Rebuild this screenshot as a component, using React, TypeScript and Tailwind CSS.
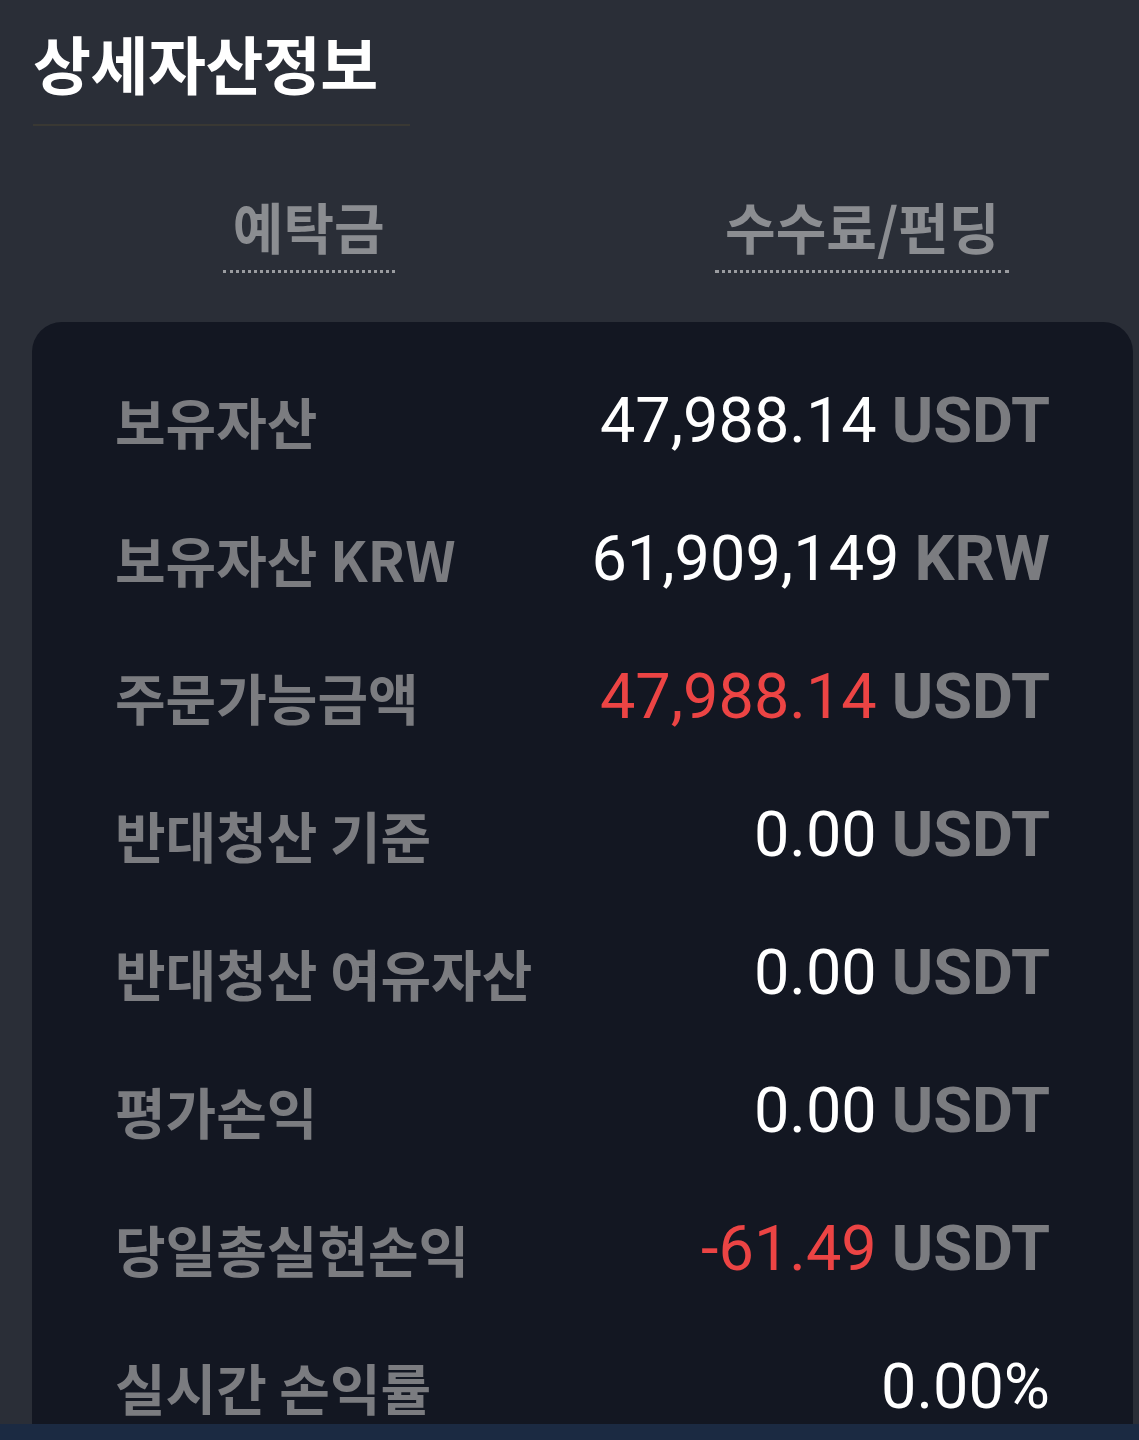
import React from "react";

/* ===============================
   DATA
   =============================== */

interface AssetRow {
  label: string;
  value: string;
  unit?: string;
  red?: boolean;
}

const rows: AssetRow[] = [
  { label: "보유자산", value: "47,988.14", unit: "USDT" },
  { label: "보유자산 KRW", value: "61,909,149", unit: "KRW" },
  { label: "주문가능금액", value: "47,988.14", unit: "USDT", red: true },
  { label: "반대청산 기준", value: "0.00", unit: "USDT" },
  { label: "반대청산 여유자산", value: "0.00", unit: "USDT" },
  { label: "평가손익", value: "0.00", unit: "USDT" },
  { label: "당일총실현손익", value: "-61.49", unit: "USDT", red: true },
  { label: "실시간 손익률", value: "0.00%" },
];

const KR = { fontFamily: '"Noto Sans CJK KR", "Noto Sans", sans-serif' };
const NUM = { fontFamily: 'Roboto, "Noto Sans CJK KR", sans-serif' };

/* ===============================
   COMPONENT
   =============================== */

export default function App() {
  return (
    <div className="w-[1139px] h-[1440px] flex flex-col bg-[#2a2e37]" style={KR}>
      <div className="h-[1424px] flex flex-col overflow-hidden">
        {/* TITLE */}
        <div className="px-[33px] pt-[22px]">
          <h1 className="text-[63px] leading-[80px] font-bold text-white tracking-[-0.5px]">
            상세자산정보
          </h1>
          <div className="mt-[22px] w-[377px] h-[2px] bg-[#393833]" />
        </div>

        {/* TABS */}
        <div className="grid grid-cols-2 ml-[32px] mt-[69px]">
          {["예탁금", "수수료/펀딩"].map((t) => (
            <div key={t} className="flex justify-center">
              <span className="px-[10px] pb-[15px] text-[55px] leading-[60px] font-bold text-[#8b8d91] border-b-[3px] border-dotted border-[#9a9ca0]">
                {t}
              </span>
            </div>
          ))}
        </div>

        {/* CARD */}
        <div className="flex-1 ml-[32px] mr-[6px] mt-[49px] rounded-t-[30px] bg-[#131722] px-[83px] pt-[29px]">
          {rows.map((r) => (
            <div key={r.label} className="h-[138px] flex items-center justify-between">
              <span className="text-[55px] leading-none font-bold text-[#7b7c80]">
                {r.label}
              </span>
              <span className="flex items-baseline gap-[15px] text-[63px] leading-none">
                <span
                  className={r.red ? "text-[#ec4444]" : "text-white"}
                  style={NUM}
                >
                  {r.value}
                </span>
                {r.unit && (
                  <span className="font-bold text-[#7b7c80]" style={NUM}>
                    {r.unit}
                  </span>
                )}
              </span>
            </div>
          ))}
        </div>
      </div>
      <div className="h-[16px] bg-[#1b2a42]" />
    </div>
  );
}
